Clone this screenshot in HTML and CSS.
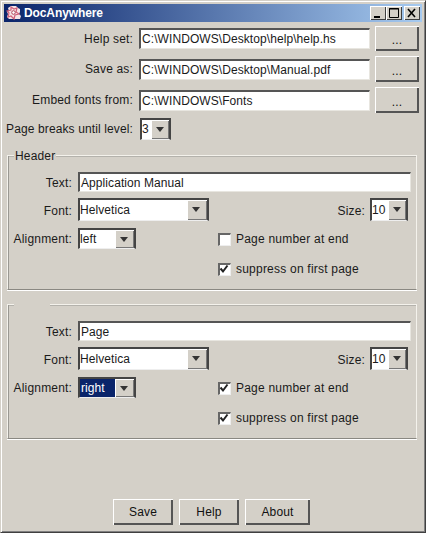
FILE: index.html
```html
<!DOCTYPE html>
<html lang="en">
<head>
<meta charset="utf-8">
<title>DocAnywhere</title>
<link rel="stylesheet" href="styles.css">
</head>
<body>
<div class="window">
  <header class="titlebar">
    <svg class="appicon" width="16" height="16" viewBox="0 0 16 16">
      <path d="M5 1h5l2 2 2 1v3l-1 2 2 2-1 3H3L1 12l1-3-1-2 2-1-1-3z" fill="#f6e2e6"/>
      <path d="M5 2l3 2 3-1-1 4 3 2-4 1-1 4-3-3-3 1 1-4-2-2 4-1z" fill="none" stroke="#d0607a" stroke-width="1.200"/>
      <circle cx="7.500" cy="7.500" r="1.800" fill="#fff" stroke="#b04058"/>
    </svg>
    <span class="title">DocAnywhere</span>
    <div class="winbtns">
      <span class="winbtn"><svg width="16" height="14" viewBox="0 0 16 14"><rect x="4" y="10" width="6" height="2" fill="#000"/></svg></span>
      <span class="winbtn"><svg width="16" height="14" viewBox="0 0 16 14"><path d="M3.500 2.500h9v9h-9z M3 3h10" fill="none" stroke="#000"/></svg></span>
      <span class="winbtn winclose"><svg width="16" height="14" viewBox="0 0 16 14"><path d="M4 3l7 8M11 3l-7 8" fill="none" stroke="#000" stroke-width="1.600"/></svg></span>
    </div>
  </header>

  <main class="content">
    <div class="filegrid">
      <label class="toplabel">Help set:</label>
      <div class="field">C:\WINDOWS\Desktop\help\help.hs</div>
      <button class="btn browse">...</button>
      <label class="toplabel">Save as:</label>
      <div class="field">C:\WINDOWS\Desktop\Manual.pdf</div>
      <button class="btn browse">...</button>
      <label class="toplabel">Embed fonts from:</label>
      <div class="field">C:\WINDOWS\Fonts</div>
      <button class="btn browse">...</button>
    </div>

    <div class="levelrow">
      <label class="toplabel levellabel">Page breaks until level:</label>
      <div class="combo combo-level"><span class="combotext">3</span><span class="arrow"></span></div>
    </div>

    <section class="group group-header">
      <span class="legend">Header</span>
      <div class="line line-text">
        <label class="grouplabel">Text:</label>
        <div class="field fieldwide">Application Manual</div>
      </div>
      <div class="line line-font">
        <label class="grouplabel">Font:</label>
        <div class="combo combo-font"><span class="combotext">Helvetica</span><span class="arrow"></span></div>
        <label class="sizelabel">Size:</label>
        <div class="combo combo-size"><span class="combotext">10</span><span class="arrow"></span></div>
      </div>
      <div class="line line-align">
        <div class="alignside">
          <label class="grouplabel">Alignment:</label>
          <div class="combo combo-align"><span class="combotext">left</span><span class="arrow"></span></div>
        </div>
        <div class="checks">
          <div class="check"><span class="box"></span><span>Page number at end</span></div>
          <div class="check"><span class="box"><svg width="10" height="10" viewBox="0 0 10 10"><path d="M1.500 4.500l2.500 3 4.500-6" fill="none" stroke="#222" stroke-width="2"/></svg></span><span>suppress on first page</span></div>
        </div>
      </div>
    </section>

    <section class="group group-footer">
      <span class="legend legend-empty"></span>
      <div class="line line-text">
        <label class="grouplabel">Text:</label>
        <div class="field fieldwide">Page</div>
      </div>
      <div class="line line-font">
        <label class="grouplabel">Font:</label>
        <div class="combo combo-font"><span class="combotext">Helvetica</span><span class="arrow"></span></div>
        <label class="sizelabel">Size:</label>
        <div class="combo combo-size"><span class="combotext">10</span><span class="arrow"></span></div>
      </div>
      <div class="line line-align">
        <div class="alignside">
          <label class="grouplabel">Alignment:</label>
          <div class="combo combo-align combo-selected"><span class="combotext">right</span><span class="arrow"></span></div>
        </div>
        <div class="checks">
          <div class="check"><span class="box"><svg width="10" height="10" viewBox="0 0 10 10"><path d="M1.500 4.500l2.500 3 4.500-6" fill="none" stroke="#222" stroke-width="2"/></svg></span><span>Page number at end</span></div>
          <div class="check"><span class="box"><svg width="10" height="10" viewBox="0 0 10 10"><path d="M1.500 4.500l2.500 3 4.500-6" fill="none" stroke="#222" stroke-width="2"/></svg></span><span>suppress on first page</span></div>
        </div>
      </div>
    </section>

    <footer class="actions">
      <button class="btn action action-save">Save</button>
      <button class="btn action action-help">Help</button>
      <button class="btn action action-about">About</button>
    </footer>
  </main>
</div>
</body>
</html>
```
FILE: styles.css
```css
* { box-sizing: border-box; }
html, body { margin: 0; padding: 0; }
body {
  width: 426px;
  height: 533px;
  overflow: hidden;
  background: #d4d0c8;
  font-family: "Liberation Sans", Arial, sans-serif;
  font-size: 12px;
  letter-spacing: 0.17px;
  color: #1a1a1a;
}
.window {
  width: 426px;
  height: 533px;
  display: flex;
  flex-direction: column;
  background: #d4d0c8;
  border: 1px solid;
  border-color: #d4d0c8 #404040 #404040 #d4d0c8;
  box-shadow: inset 1px 1px 0 #fff, inset -1px -1px 0 #808080;
  padding: 3px;
}
.titlebar {
  height: 18px;
  flex: none;
  display: flex;
  align-items: center;
  padding: 0 2px 0 2px;
  background: linear-gradient(90deg, #0a246a, #a6caf0);
  color: #fff;
}
.appicon { flex: none; margin-right: 2px; }
.title { font-weight: bold; font-size: 12px; letter-spacing: -0.1px; }
.winbtns { margin-left: auto; display: flex; }
.winbtn {
  width: 16px;
  height: 14px;
  background: #d4d0c8;
  box-shadow: inset 1px 1px 0 #fff, inset -1px -1px 0 #404040;
  display: block;
}
.winbtn svg { display: block; }
.winclose { margin-left: 2px; }

.content {
  flex: 1;
  display: flex;
  flex-direction: column;
  padding: 4px 3px 0 2px;
  min-height: 0;
}
.filegrid {
  display: grid;
  grid-template-columns: 127px 231px 44px;
  grid-template-rows: 25px 26px 26px;
  column-gap: 6px;
  row-gap: 5px;
  align-items: center;
}
.filegrid .btn { margin-left: -1px; width: 44px; height: 100%; }
.toplabel { text-align: right; white-space: nowrap; }
.levellabel { width: 127px; flex: none; letter-spacing: 0.12px; }
.field {
  background: #fff;
  height: 21px;
  line-height: 18px;
  padding: 0 0 0 1px;
  border-top: 2px solid #555;
  border-left: 2px solid #555;
  border-bottom: 1px solid #e8e6e0;
  border-right: 1px solid #e8e6e0;
  white-space: nowrap;
  overflow: hidden;
  letter-spacing: 0.08px;
}
.btn {
  background: #d4d0c8;
  border: 0;
  padding: 0;
  margin: 0;
  font: inherit;
  letter-spacing: inherit;
  color: #111;
  box-shadow: inset 1px 1px 0 #fff, inset -2px -2px 0 #555;
}
.browse { padding-top: 3px; }

.levelrow {
  display: flex;
  align-items: center;
  margin-top: 5px;
  gap: 7px;
  height: 22px;
}
.combo {
  display: flex;
  height: 22px;
  background: #fff;
  border-top: 2px solid #444;
  border-left: 2px solid #444;
  border-right: 2px solid #444;
  border-bottom: 1px solid #eee;
  line-height: 19px;
  letter-spacing: 0.08px;
}
.combotext { flex: 1; padding-left: 0; overflow: hidden; white-space: nowrap; }
.arrow {
  flex: none;
  width: 19px;
  background: #d4d0c8;
  box-shadow: inset 1px 1px 0 #fff, inset -1px -1px 0 #777;
  position: relative;
}
.arrow::after {
  content: "";
  position: absolute;
  left: 5px;
  top: 7px;
  border: 4.500px solid transparent;
  border-top: 5px solid #333;
  border-bottom: 0;
}
.combo-level { width: 31px; }
.combo-level .arrow { width: 18px; }
.combo-font { width: 131px; height: 23px; line-height: 21px; }
.combo-font .arrow { width: 20px; }
.combo-size { width: 38px; height: 23px; line-height: 21px; }
.combo-size .arrow { width: 18px; }
.combo-align { width: 58px; height: 21px; }
.combo-selected .combotext { background: #0a246a; color: #fff; padding-left: 1px; }

.group {
  position: relative;
  width: 410px;
  height: 135px;
  margin-left: 1px;
  padding: 16px 5px 0 5px;
  border: 1px solid #8a8882;
  border-top-color: #f4f2ec;
  border-right-color: #f4f2ec;
  border-left-color: #f4f2ec;
  box-shadow: 0 1px 0 #fff, inset 1px 0 0 #9a9892, inset 0 1px 0 #b4b2ac;
  flex: none;
}
.group-header { margin-top: 15px; }
.group-footer { margin-top: 14px; }
.legend {
  position: absolute;
  left: 6px;
  top: -7px;
  height: 14px;
  line-height: 14px;
  background: #d4d0c8;
  padding: 0 1px;
}
.legend-empty { width: 36px; }
.line { display: flex; align-items: center; }
.grouplabel { width: 60px; flex: none; text-align: right; margin-left: -1px; margin-right: 6px; white-space: nowrap; }
.line-text .grouplabel, .line-font .grouplabel { padding-top: 2px; }
.line-text { height: 20px; }
.fieldwide { flex: 1; height: 20px; }
.line-font { height: 23px; margin-top: 6px; }
.sizelabel { margin-left: auto; margin-right: 5px; padding-top: 2px; }
.combo-size { margin-right: 3px; }
.line-align { align-items: flex-start; margin-top: 7px; }
.alignside { display: flex; align-items: center; width: 205px; flex: none; }
.checks { display: flex; flex-direction: column; gap: 12px; margin-top: 2px; padding-left: 0; }
.check { display: flex; align-items: center; height: 18px; gap: 5px; letter-spacing: 0.22px; }
.box {
  width: 13px;
  height: 13px;
  background: #fff;
  border-top: 2px solid #666;
  border-left: 2px solid #666;
  border-right: 1px solid #eee;
  border-bottom: 1px solid #eee;
  flex: none;
  display: block;
}
.box svg { display: block; margin: -1px 0 0 -1px; }

.actions {
  margin-top: auto;
  display: flex;
  gap: 6px;
  padding-left: 107px;
  padding-bottom: 4px;
}
.action { height: 26px; }
.action-save { width: 60px; }
.action-help { width: 60px; }
.action-about { width: 65px; }
```
